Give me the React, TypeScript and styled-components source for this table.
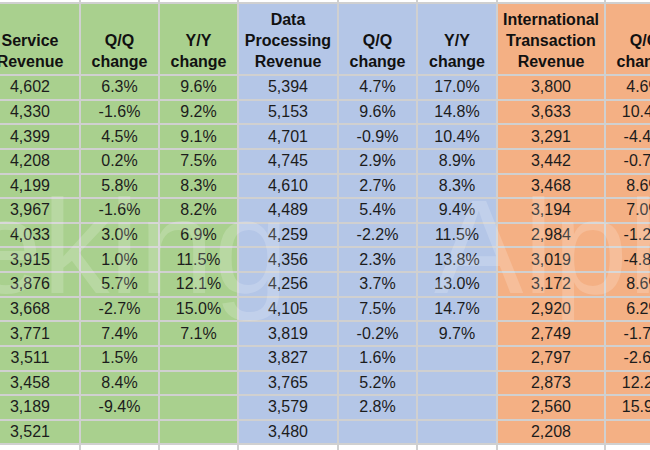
import React from "react";
import styled, { createGlobalStyle } from "styled-components";

const GlobalStyle = createGlobalStyle`
  html, body {
    margin: 0;
    padding: 0;
    background: #ffffff;
    overflow: hidden;
  }
  body {
    font-family: "Liberation Sans", Arial, sans-serif;
  }
`;

type Tone = "green" | "blue" | "orange" | "blank";

const TONES: { [key in Tone]: string } = {
  green: "#a9d08e",
  blue: "#b4c6e7",
  orange: "#f4b084",
  blank: "#ffffff",
};

const Page = styled.div`
  position: relative;
  width: 650px;
  height: 450px;
  overflow: hidden;
`;

const Sheet = styled.div`
  display: grid;
  grid-template-columns: 98px 77px 77px 98px 77px 78px 106px 77px;
  grid-template-rows: 2px 70px repeat(15, 22.64px) 20px;
  gap: 2px;
  width: max-content;
  margin-left: -19px;
  background: #d0d0d0;
`;

const Cell = styled.div<{ $tone: Tone }>`
  display: flex;
  align-items: center;
  justify-content: center;
  background: ${(p) => TONES[p.$tone]};
  color: #1c1c1c;
  font-size: 16px;
  white-space: nowrap;
  overflow: hidden;
`;

const HeadCell = styled(Cell)`
  align-items: flex-end;
  padding-bottom: 2px;
  box-sizing: border-box;
  font-weight: bold;
  line-height: 21px;
  text-align: center;
  white-space: normal;
  color: #111111;
`;

// faint "Seeking Alpha" stamp laid over the sheet
const Watermark = styled.div`
  position: absolute;
  left: -196px;
  top: 180px;
  font-size: 134px;
  line-height: 1;
  word-spacing: 116px;
  color: rgba(255, 255, 255, 0.18);
  white-space: nowrap;
  pointer-events: none;
`;

interface Column {
  tone: Tone;
  head: string[];
  values: string[];
}

const COLUMNS: Column[] = [
  {
    tone: "green",
    head: ["Service", "Revenue"],
    values: ["4,602", "4,330", "4,399", "4,208", "4,199", "3,967", "4,033", "3,915", "3,876", "3,668", "3,771", "3,511", "3,458", "3,189", "3,521"],
  },
  {
    tone: "green",
    head: ["Q/Q", "change"],
    values: ["6.3%", "-1.6%", "4.5%", "0.2%", "5.8%", "-1.6%", "3.0%", "1.0%", "5.7%", "-2.7%", "7.4%", "1.5%", "8.4%", "-9.4%", ""],
  },
  {
    tone: "green",
    head: ["Y/Y", "change"],
    values: ["9.6%", "9.2%", "9.1%", "7.5%", "8.3%", "8.2%", "6.9%", "11.5%", "12.1%", "15.0%", "7.1%", "", "", "", ""],
  },
  {
    tone: "blue",
    head: ["Data", "Processing", "Revenue"],
    values: ["5,394", "5,153", "4,701", "4,745", "4,610", "4,489", "4,259", "4,356", "4,256", "4,105", "3,819", "3,827", "3,765", "3,579", "3,480"],
  },
  {
    tone: "blue",
    head: ["Q/Q", "change"],
    values: ["4.7%", "9.6%", "-0.9%", "2.9%", "2.7%", "5.4%", "-2.2%", "2.3%", "3.7%", "7.5%", "-0.2%", "1.6%", "5.2%", "2.8%", ""],
  },
  {
    tone: "blue",
    head: ["Y/Y", "change"],
    values: ["17.0%", "14.8%", "10.4%", "8.9%", "8.3%", "9.4%", "11.5%", "13.8%", "13.0%", "14.7%", "9.7%", "", "", "", ""],
  },
  {
    tone: "orange",
    head: ["International", "Transaction", "Revenue"],
    values: ["3,800", "3,633", "3,291", "3,442", "3,468", "3,194", "2,984", "3,019", "3,172", "2,920", "2,749", "2,797", "2,873", "2,560", "2,208"],
  },
  {
    tone: "orange",
    head: ["Q/Q", "change"],
    values: ["4.6%", "10.4%", "-4.4%", "-0.7%", "8.6%", "7.0%", "-1.2%", "-4.8%", "8.6%", "6.2%", "-1.7%", "-2.6%", "12.2%", "15.9%", ""],
  },
];

const ROW_COUNT = 15;

export default function App() {
  const rows: React.ReactNode[] = [];

  // blank spreadsheet row above the header
  COLUMNS.forEach((_c, i) => rows.push(<Cell key={`top-${i}`} $tone="blank" />));

  COLUMNS.forEach((col, i) =>
    rows.push(
      <HeadCell key={`head-${i}`} $tone={col.tone}>
        <span>
          {col.head.map((line, j) => (
            <React.Fragment key={j}>
              {j > 0 && <br />}
              {line}
            </React.Fragment>
          ))}
        </span>
      </HeadCell>
    )
  );

  for (let r = 0; r < ROW_COUNT; r++) {
    COLUMNS.forEach((col, i) =>
      rows.push(
        <Cell key={`r${r}-${i}`} $tone={col.tone}>
          {col.values[r]}
        </Cell>
      )
    );
  }

  // blank row below
  COLUMNS.forEach((_c, i) => rows.push(<Cell key={`bottom-${i}`} $tone="blank" />));

  return (
    <Page>
      <GlobalStyle />
      <Sheet>{rows}</Sheet>
      <Watermark>Seeking Alpha</Watermark>
    </Page>
  );
}
